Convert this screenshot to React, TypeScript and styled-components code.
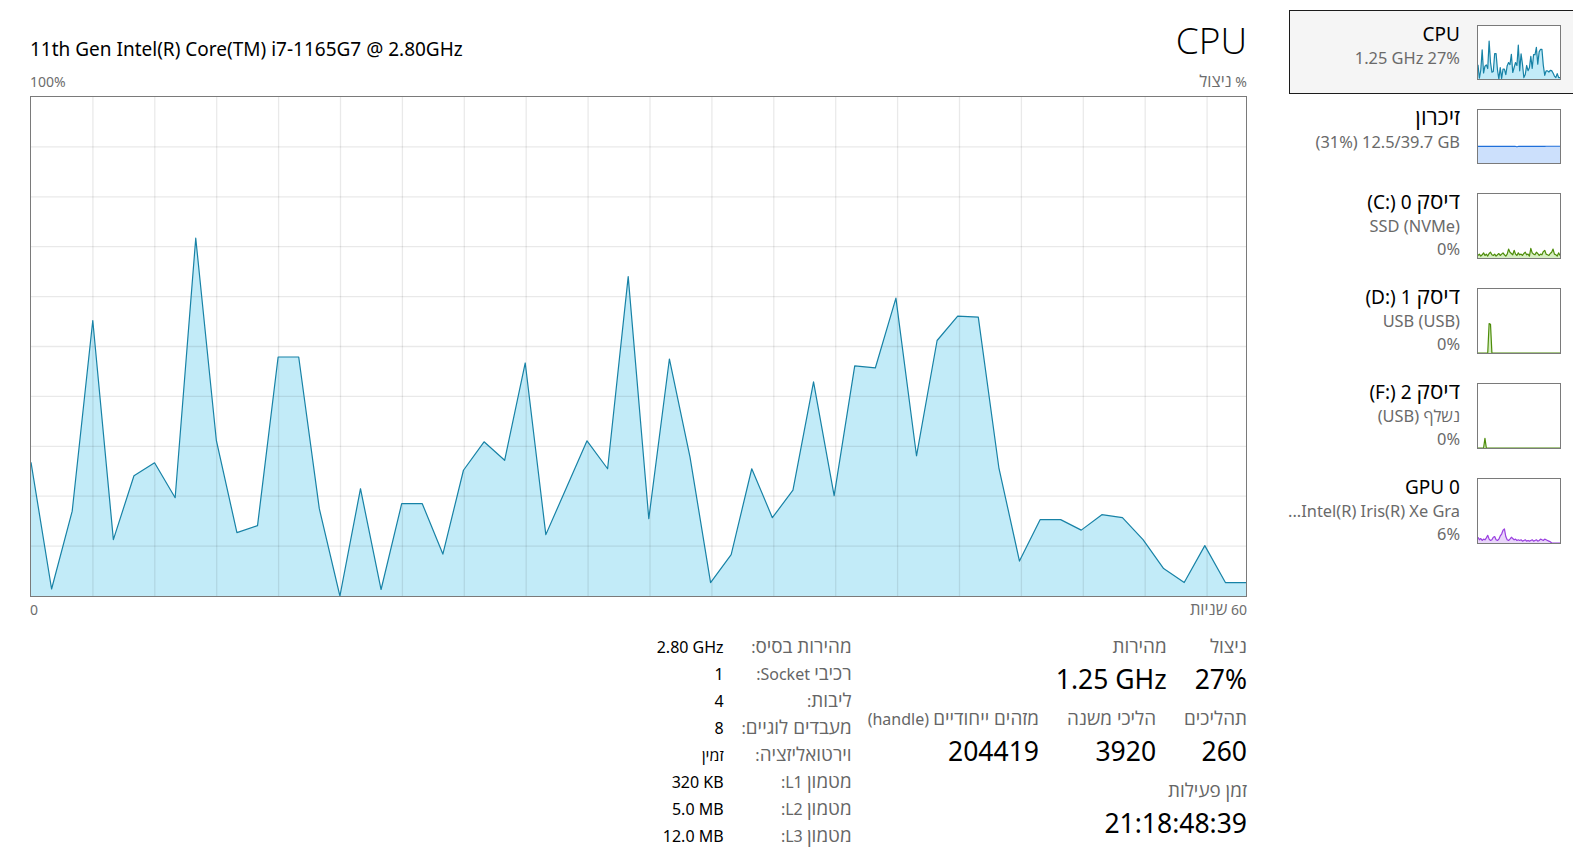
import React from 'react';
import styled, { createGlobalStyle } from 'styled-components';

const GlobalStyle = createGlobalStyle`
  html, body {
    margin: 0;
    padding: 0;
    background: #ffffff;
  }
  body {
    font-family: 'Noto Sans', 'Open Sans', 'Liberation Sans', sans-serif;
    color: #000000;
    overflow: hidden;
  }
`;

// the fallback Hebrew face is smaller than the original one, so Hebrew runs are scaled up
const He = styled.span`
  font-size: 1.18em;
  line-height: 0;
`;

const hebrewRun = /([\u0590-\u05FF][\u0590-\u05FF ]*[\u0590-\u05FF]|[\u0590-\u05FF])/;
const isHebrew = (s: string) => /[\u0590-\u05FF]/.test(s);

const heb = (text: string) =>
  text.split(hebrewRun).map((part, i) => (isHebrew(part) ? <He key={i}>{part}</He> : part));

// cpu usage, last 60 seconds (oldest first)
const cpuHistory = [
  26.8, 1.4, 17, 55.2, 11.3, 24.1, 26.7, 19.7, 71.7, 31.2, 12.7, 14.1, 47.9, 47.9, 17.5,
  0, 21.5, 1.3, 18.5, 18.5, 8.4, 25.2, 30.9, 27.2, 46.7, 12.3, 21.7, 31.1, 25.5, 64,
  15.5, 47.5, 27.9, 2.7, 8.3, 25.5, 15.7, 21.2, 42.9, 20.1, 46.1, 45.7, 59.7, 28.1, 51.2,
  56.1, 55.9, 25.7, 7, 15.3, 15.3, 13.2, 16.3, 15.7, 11.3, 5.5, 2.7, 10.1, 2.7, 2.7,
];

const memHistory = Array.from({ length: 60 }, (_, i) =>
  i === 28 ? 30.6 : i >= 49 ? 31.6 : 31.2
);

const disk0History = [
  4, 6, 3, 5, 8, 4, 6, 3, 7, 9, 5, 4, 6, 3, 5, 7, 4, 6, 8, 5, 3, 6, 14, 9, 7, 5, 12, 6, 4, 8,
  5, 6, 4, 7, 9, 5, 6, 3, 15, 8, 6, 5, 9, 7, 4, 6, 5, 10, 12, 6, 5, 4, 7, 9, 14, 6, 5, 3, 8, 4,
];

const disk1History = Array.from({ length: 60 }, (_, i) => (i === 8 ? 46 : i === 9 ? 45 : 0));
const disk2History = Array.from({ length: 60 }, (_, i) => (i === 5 ? 15 : 0));

const gpuHistory = [
  9, 5, 7, 4, 6, 5, 8, 12, 6, 4, 5, 9, 10, 5, 4, 6, 11, 14, 20, 22, 10, 5, 4, 6, 9, 7, 5, 6, 4, 5,
  4, 5, 3, 4, 5, 3, 4, 3, 4, 5, 3, 4, 5, 3, 4, 6, 5, 4, 6, 5, 4, 3, 2, 0, 0, 0, 0, 0, 0, 0,
];

const palette = {
  cpu: { stroke: '#1782a6', fill: '#c2ebf8' },
  mem: { stroke: '#1f6fd9', fill: '#cce0fc' },
  disk: { stroke: '#4d8c0a', fill: '#d7efc2' },
  gpu: { stroke: '#9a3fe0', fill: '#e9d5fa' },
};

interface GraphProps {
  data: number[];
  width: number;
  height: number;
  stroke: string;
  fill: string;
  grid?: boolean;
}

const UsageGraph: React.FC<GraphProps> = ({ data, width, height, stroke, fill, grid }) => {
  const step = width / (data.length - 1);
  const pts = data.map((v, i) => `${(i * step).toFixed(2)},${(height - (v / 100) * height).toFixed(2)}`);
  const area = `0,${height} ${pts.join(' ')} ${width},${height}`;

  const vLines: number[] = [];
  const hLines: number[] = [];
  if (grid) {
    for (let x = 61.9; x < width; x += 61.9) vLines.push(x);
    for (let y = height / 10; y < height - 1; y += height / 10) hLines.push(y);
  }

  return (
    <svg width={width} height={height} viewBox={`0 0 ${width} ${height}`}>
      <polygon points={area} fill={fill} />
      {vLines.map((x) => (
        <line key={`v${x}`} x1={x} x2={x} y1={0} y2={height} stroke="rgba(0,0,0,0.085)" strokeWidth={1.3} />
      ))}
      {hLines.map((y) => (
        <line key={`h${y}`} x1={0} x2={width} y1={y} y2={y} stroke="rgba(0,0,0,0.085)" strokeWidth={1.3} />
      ))}
      <polyline points={pts.join(' ')} fill="none" stroke={stroke} strokeWidth={1.2} strokeLinejoin="round" />
    </svg>
  );
};

const Page = styled.div`
  display: flex;
  direction: rtl;
  width: 1573px;
  height: 865px;
  padding-top: 10px;
  box-sizing: border-box;
  overflow: hidden;
`;

const Sidebar = styled.nav`
  flex: 0 0 290px;
  width: 290px;
  min-width: 0;
  margin-right: -6px;
  display: flex;
  flex-direction: column;
`;

const SideItem = styled.div<{ $active?: boolean }>`
  display: flex;
  align-items: flex-start;
  gap: 17px;
  padding: 14px 17px 13px 0;
  border: 1px solid ${({ $active }) => ($active ? '#1c1c1c' : 'transparent')};
  background: ${({ $active }) => ($active ? '#f5f5f5' : 'transparent')};
`;

const Thumb = styled.div<{ $tall?: boolean }>`
  flex: 0 0 84px;
  height: ${({ $tall }) => ($tall ? 66 : 55)}px;
  box-sizing: border-box;
  border: 1px solid #7a7a7a;
  background: #ffffff;
  overflow: hidden;

  svg {
    display: block;
  }
`;

const SideText = styled.div`
  flex: 1;
  min-width: 0;
  margin: -3px 0 -1px;
  text-align: right;
  white-space: nowrap;
`;

const SideTitle = styled.div`
  font-size: 19px;
  line-height: 24px;
  color: #000000;
`;

const SideSub = styled.div`
  font-size: 16.4px;
  line-height: 23px;
  color: #6a6a6a;
`;

const Main = styled.main`
  flex: 0 0 1217px;
  min-width: 0;
  margin-right: 42px;
  padding-top: 7px;
  display: flex;
  flex-direction: column;
`;

const HeaderRow = styled.div`
  display: flex;
  justify-content: space-between;
  align-items: flex-end;
`;

const PageTitle = styled.h1`
  margin: 0;
  font-family: 'Open Sans', 'Noto Sans', sans-serif;
  font-size: 37px;
  line-height: 46px;
  font-weight: 300;
`;

const ProcessorName = styled.div`
  font-size: 19px;
  line-height: 28px;
`;

const AxisRow = styled.div<{ $top: number; $bottom: number }>`
  display: flex;
  justify-content: space-between;
  height: 20px;
  margin: ${({ $top, $bottom }) => `${$top}px 0 ${$bottom}px`};
  font-size: 14px;
  line-height: 20px;
  color: #6d6d6d;
`;

const ChartFrame = styled.div`
  width: 1217px;
  height: 501px;
  box-sizing: border-box;
  border: 1px solid #7a7a7a;

  svg {
    display: block;
  }
`;

const StatsArea = styled.section`
  display: flex;
  align-items: flex-start;
  gap: 16px;
  margin-top: 15px;
`;

const LiveStats = styled.div`
  display: flex;
  flex-direction: column;
  gap: 8px;
`;

const StatRow = styled.div`
  display: flex;
  gap: 28px;
`;

const Stat = styled.div`
  display: flex;
  flex-direction: column;
  white-space: nowrap;
`;

const StatLabel = styled.span`
  font-size: 16px;
  line-height: 24px;
  color: #666666;
`;

const StatValue = styled.span`
  font-size: 26.5px;
  line-height: 40px;
  color: #000000;
`;

const SpecTable = styled.div`
  display: grid;
  grid-template-columns: 110px auto;
  column-gap: 18px;
  margin-top: -1px;
  font-size: 16px;
  line-height: 27px;
  white-space: nowrap;
`;

const SpecLabel = styled.span`
  color: #666666;
`;

const SpecValue = styled.span`
  color: #000000;
`;

interface Device {
  id: string;
  title: React.ReactNode;
  lines: React.ReactNode[];
  data: number[];
  colors: { stroke: string; fill: string };
  active?: boolean;
}

const devices: Device[] = [
  {
    id: 'cpu',
    title: 'CPU',
    lines: [<bdi dir="ltr">1.25 GHz 27%</bdi>],
    data: cpuHistory,
    colors: palette.cpu,
    active: true,
  },
  {
    id: 'mem',
    title: heb('זיכרון'),
    lines: [<bdi dir="ltr">(31%) 12.5/39.7 GB</bdi>],
    data: memHistory,
    colors: palette.mem,
  },
  {
    id: 'disk0',
    title: <>{heb('דיסק 0 ')}<bdi dir="ltr">(C:)</bdi></>,
    lines: [<bdi dir="ltr">SSD (NVMe)</bdi>, '0%'],
    data: disk0History,
    colors: palette.disk,
  },
  {
    id: 'disk1',
    title: <>{heb('דיסק 1 ')}<bdi dir="ltr">(D:)</bdi></>,
    lines: [<bdi dir="ltr">USB (USB)</bdi>, '0%'],
    data: disk1History,
    colors: palette.disk,
  },
  {
    id: 'disk2',
    title: <>{heb('דיסק 2 ')}<bdi dir="ltr">(F:)</bdi></>,
    lines: ['נשלף (USB)', '0%'],
    data: disk2History,
    colors: palette.disk,
  },
  {
    id: 'gpu',
    title: <bdi dir="ltr">GPU 0</bdi>,
    lines: [<bdi dir="ltr">...Intel(R) Iris(R) Xe Gra</bdi>, '6%'],
    data: gpuHistory,
    colors: palette.gpu,
  },
];

const liveRows: [string, string][][] = [
  [
    ['ניצול', '27%'],
    ['מהירות', '1.25 GHz'],
  ],
  [
    ['תהליכים', '260'],
    ['הליכי משנה', '3920'],
    ['מזהים ייחודיים (handle)', '204419'],
  ],
  [['זמן פעילות', '21:18:48:39']],
];

const specs: [string, string][] = [
  ['מהירות בסיס:', '2.80 GHz'],
  ['רכיבי Socket:', '1'],
  ['ליבות:', '4'],
  ['מעבדים לוגיים:', '8'],
  ['וירטואליזציה:', 'זמין'],
  ['מטמון L1:', '320 KB'],
  ['מטמון L2:', '5.0 MB'],
  ['מטמון L3:', '12.0 MB'],
];

export default function App() {
  return (
    <>
      <GlobalStyle />
      <Page dir="rtl">
        <Sidebar>
          {devices.map((d) => {
            const tall = d.lines.length > 1;
            return (
              <SideItem key={d.id} $active={d.active}>
                <Thumb $tall={tall}>
                  <UsageGraph data={d.data} width={82} height={tall ? 64 : 53} {...d.colors} />
                </Thumb>
                <SideText>
                  <SideTitle>{d.title}</SideTitle>
                  {d.lines.map((l, i) => (
                    <SideSub key={i}>{l}</SideSub>
                  ))}
                </SideText>
              </SideItem>
            );
          })}
        </Sidebar>

        <Main>
          <HeaderRow>
            <PageTitle>CPU</PageTitle>
            <ProcessorName dir="ltr">11th Gen Intel(R) Core(TM) i7-1165G7 @ 2.80GHz</ProcessorName>
          </HeaderRow>

          <AxisRow $top={9} $bottom={4}>
            <span>{heb('% ניצול')}</span>
            <span>100%</span>
          </AxisRow>

          <ChartFrame>
            <UsageGraph data={cpuHistory} width={1215} height={499} grid {...palette.cpu} />
          </ChartFrame>

          <AxisRow $top={3} $bottom={0}>
            <span>{heb('60 שניות')}</span>
            <span>0</span>
          </AxisRow>

          <StatsArea>
            <LiveStats>
              {liveRows.map((row, r) => (
                <StatRow key={r}>
                  {row.map(([label, value]) => (
                    <Stat key={label}>
                      <StatLabel>{heb(label)}</StatLabel>
                      <StatValue>
                        <bdi dir="ltr">{value}</bdi>
                      </StatValue>
                    </Stat>
                  ))}
                </StatRow>
              ))}
            </LiveStats>

            <SpecTable>
              {specs.map(([label, value]) => (
                <React.Fragment key={label}>
                  <SpecLabel>{heb(label)}</SpecLabel>
                  <SpecValue>
                    <bdi dir="ltr">{value}</bdi>
                  </SpecValue>
                </React.Fragment>
              ))}
            </SpecTable>
          </StatsArea>
        </Main>
      </Page>
    </>
  );
}
